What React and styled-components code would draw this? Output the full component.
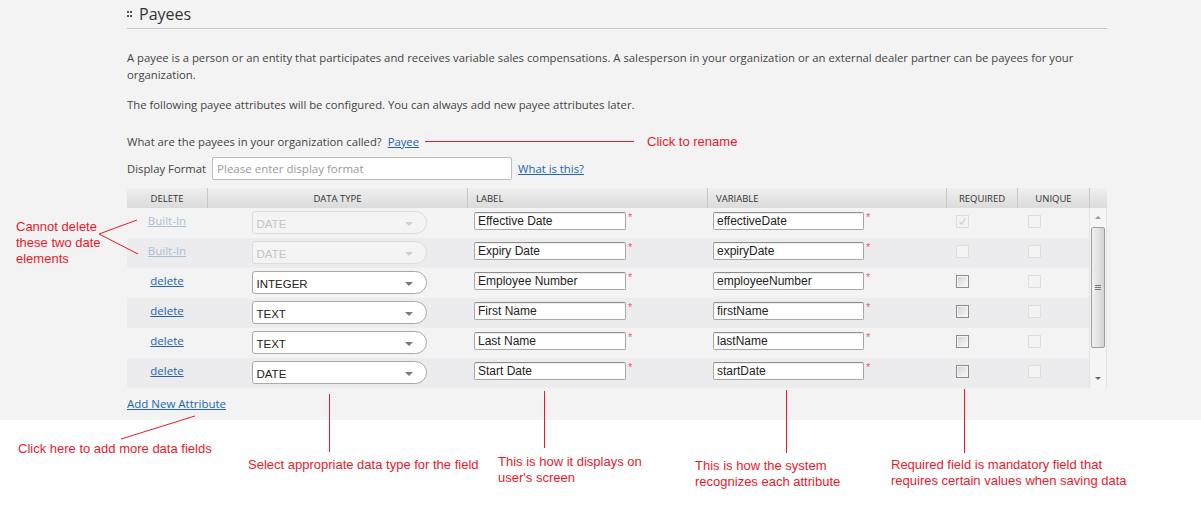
import React from 'react';
import styled, { createGlobalStyle, css } from 'styled-components';

const RED = '#e8192c';

const GlobalStyle = createGlobalStyle`
  html, body { margin: 0; padding: 0; background: #fff; }
  body { font-family: "Open Sans", "Noto Sans", sans-serif; color: #444; }
`;

const Page = styled.div`
  position: relative;
  width: 1201px;
  height: 510px;
  overflow: hidden;
  background: #fff;
`;

const Panel = styled.section`
  background: #f3f3f3;
  height: 420px;
  padding-left: 127px;
  box-sizing: border-box;
`;

const Column = styled.div`
  width: 980px;
`;

const TitleBar = styled.div`
  height: 28px;
  border-bottom: 1px solid #c6c6c6;
  display: flex;
  align-items: center;
  gap: 7px;
`;

const Title = styled.h2`
  margin: 0;
  font-size: 16px;
  font-weight: 400;
  color: #333;
  line-height: 28px;
`;

const Para = styled.p`
  margin: ${(p) => p.$top}px 0 0;
  font-size: 11.3px;
  line-height: 17px;
  color: #444;
`;

const Link = styled.a`
  color: ${(p) => (p.$muted ? '#a9c0d8' : '#2665ad')};
  text-decoration: underline;
  cursor: pointer;
`;

const QuestionRow = styled.div`
  margin-top: 20px;
  height: 17px;
  display: flex;
  align-items: center;
  font-size: 11.3px;
  color: #444;
`;

const Leader = styled.span`
  width: 209px;
  height: 1px;
  background: ${RED};
  margin: 0 13px 0 6px;
`;

const Note = styled.span`
  font-family: "Liberation Sans", Arial, sans-serif;
  font-size: 13px;
  line-height: 16px;
  color: ${RED};
  white-space: nowrap;
`;

const FormatRow = styled.div`
  margin-top: 7px;
  display: flex;
  align-items: center;
  gap: 6px;
  font-size: 11.3px;
  color: #444;
`;

const FormatInput = styled.input`
  width: 300px;
  height: 23px;
  box-sizing: border-box;
  border: 1px solid #bdbdbd;
  border-radius: 2px;
  padding: 0 4px;
  font-family: "Open Sans", sans-serif;
  font-size: 11.5px;
  background: #fff;
  &::placeholder { color: #9a9a9a; }
`;

const Table = styled.div`
  margin-top: 8px;
  width: 980px;
`;

const COLS = '80px 260px 240px 239px 71px 72px';

const HeaderRow = styled.div`
  display: grid;
  grid-template-columns: ${COLS} 18px;
  height: 20px;
  background: linear-gradient(#efefef, #dbdbdb);
`;

const HeaderCell = styled.div`
  display: flex;
  align-items: center;
  justify-content: ${(p) => (p.$left ? 'flex-start' : 'center')};
  padding-left: ${(p) => (p.$left ? '8px' : '0')};
  border-left: ${(p) => (p.$first ? 'none' : '1px solid #c9c9c9')};
  font-size: 9.5px;
  color: #333;
  text-transform: uppercase;
`;

const Body = styled.div`
  display: flex;
`;

const Rows = styled.div`
  width: 962px;
`;

const Row = styled.div`
  display: grid;
  grid-template-columns: ${COLS};
  height: 30px;
  background: ${(p) => (p.$alt ? '#ececee' : '#f3f3f3')};
`;

const Cell = styled.div`
  display: flex;
  align-items: flex-start;
  justify-content: ${(p) => (p.$center ? 'center' : 'flex-start')};
  padding-top: ${(p) => p.$top || 0}px;
  padding-left: ${(p) => p.$left || 0}px;
  box-sizing: border-box;
`;

const DeleteLink = styled(Link)`
  font-size: 11.5px;
  line-height: 15px;
`;

const Select = styled.div`
  width: 175px;
  height: 23px;
  box-sizing: border-box;
  border: 1px solid ${(p) => (p.$disabled ? '#dcdcdc' : '#a9a9a9')};
  border-radius: 3px 12px 12px 3px;
  background: ${(p) => (p.$disabled ? '#f4f4f4' : '#fff')};
  color: ${(p) => (p.$disabled ? '#c4c4c4' : '#222')};
  font-family: "Liberation Sans", Arial, sans-serif;
  font-size: 11.5px;
  display: flex;
  align-items: center;
  justify-content: space-between;
  padding: 2px 13px 0 4px;
  &::after {
    content: '';
    border-left: 4px solid transparent;
    border-right: 4px solid transparent;
    border-top: 4px solid ${(p) => (p.$disabled ? '#cfcfcf' : '#7a7a7a')};
  }
`;

const TextInput = styled.input`
  width: ${(p) => p.$w}px;
  height: 18px;
  box-sizing: border-box;
  border: 1px solid #a8a8a8;
  border-top-color: #8e8e8e;
  border-radius: 2px;
  box-shadow: inset 0 1px 1px rgba(0, 0, 0, 0.08);
  padding: 0 3px;
  font-family: "Liberation Sans", Arial, sans-serif;
  font-size: 12px;
  color: #222;
  background: #fff;
`;

const Star = styled.span`
  color: #f05a6a;
  font-family: "Liberation Sans", Arial, sans-serif;
  font-size: 11px;
  line-height: 11px;
  margin-left: 2px;
`;

const Check = styled.span`
  width: 13px;
  height: 13px;
  box-sizing: border-box;
  display: flex;
  align-items: center;
  justify-content: center;
  ${(p) =>
    p.$disabled
      ? css`
          border: 1px solid #dedede;
          background: #f3f3f3;
        `
      : css`
          border: 1px solid #8c8c8c;
          background: linear-gradient(135deg, #d2d2d2, #fbfbfb);
          box-shadow: inset 0 0 0 1px #f4f4f4;
        `}
`;

const Scrollbar = styled.div`
  width: 18px;
  height: 180px;
  box-sizing: border-box;
  border-left: 1px solid #e3e3e3;
  border-right: 1px solid #e3e3e3;
  background: #f5f5f5;
  display: flex;
  flex-direction: column;
  align-items: center;
`;

const ArrowBox = styled.div`
  height: 19px;
  display: flex;
  align-items: center;
  justify-content: center;
  &::after {
    content: '';
    border-left: 3px solid transparent;
    border-right: 3px solid transparent;
    ${(p) =>
      p.$down
        ? css`border-top: 3px solid #6a6a6a;`
        : css`border-bottom: 3px solid #9a9a9a;`}
  }
`;

const Thumb = styled.div`
  width: 14px;
  height: 121px;
  box-sizing: border-box;
  border: 1px solid #9e9e9e;
  border-radius: 2px;
  background: linear-gradient(90deg, #f0f0f0, #d4d4d4);
  display: flex;
  flex-direction: column;
  align-items: center;
  justify-content: center;
  gap: 1px;
`;

const GripLine = styled.span`
  width: 6px;
  height: 1px;
  background: #777;
`;

const Spacer = styled.div`
  flex: 1;
`;

const AddRow = styled.div`
  margin-top: 7px;
  font-size: 11.5px;
  line-height: 17px;
`;

const Callout = styled(Note)`
  position: absolute;
  left: ${(p) => p.$x}px;
  top: ${(p) => p.$y}px;
`;

const LeaderLines = styled.svg`
  position: absolute;
  left: 0;
  top: 0;
  pointer-events: none;
`;

const rows = [
  { builtIn: true, type: 'DATE', label: 'Effective Date', variable: 'effectiveDate', req: 'checked' },
  { builtIn: true, type: 'DATE', label: 'Expiry Date', variable: 'expiryDate', req: 'disabled' },
  { type: 'INTEGER', label: 'Employee Number', variable: 'employeeNumber' },
  { type: 'TEXT', label: 'First Name', variable: 'firstName' },
  { type: 'TEXT', label: 'Last Name', variable: 'lastName' },
  { type: 'DATE', label: 'Start Date', variable: 'startDate' },
];

function Grip() {
  return (
    <svg width="5" height="6" viewBox="0 0 5 6">
      <rect x="0" y="0" width="2" height="2" fill="#555" />
      <rect x="3" y="0" width="2" height="2" fill="#555" />
      <rect x="0" y="4" width="2" height="2" fill="#555" />
      <rect x="3" y="4" width="2" height="2" fill="#555" />
    </svg>
  );
}

function CheckMark() {
  return (
    <svg width="9" height="9" viewBox="0 0 9 9">
      <path d="M1.5 5 L3.5 7 L7.5 1.5" stroke="#cfcfcf" strokeWidth="1.2" fill="none" />
    </svg>
  );
}

function AttributeRow({ row, alt }) {
  return (
    <Row $alt={alt}>
      <Cell $center $top={5}>
        <DeleteLink $muted={row.builtIn}>{row.builtIn ? 'Built-In' : 'delete'}</DeleteLink>
      </Cell>
      <Cell $center $top={3} $left={4}>
        <Select $disabled={row.builtIn}>{row.type}</Select>
      </Cell>
      <Cell $top={4} $left={7}>
        <TextInput $w={152} defaultValue={row.label} />
        <Star>*</Star>
      </Cell>
      <Cell $top={4} $left={6}>
        <TextInput $w={151} defaultValue={row.variable} />
        <Star>*</Star>
      </Cell>
      <Cell $top={7} $left={10}>
        <Check $disabled={!!row.req}>{row.req === 'checked' && <CheckMark />}</Check>
      </Cell>
      <Cell $top={7} $left={11}>
        <Check $disabled />
      </Cell>
    </Row>
  );
}

export default function App() {
  return (
    <Page>
      <GlobalStyle />
      <Panel>
        <Column>
          <TitleBar>
            <Grip />
            <Title>Payees</Title>
          </TitleBar>
          <Para $top={20}>
            A payee is a person or an entity that participates and receives variable sales compensations. A
            salesperson in your organization or an external dealer partner can be payees for your organization.
          </Para>
          <Para $top={13}>
            The following payee attributes will be configured. You can always add new payee attributes later.
          </Para>
          <QuestionRow>
            What are the payees in your organization called?&nbsp;&nbsp;<Link>Payee</Link>
            <Leader />
            <Note>Click to rename</Note>
          </QuestionRow>
          <FormatRow>
            Display Format
            <FormatInput placeholder="Please enter display format" />
            <Link>What is this?</Link>
          </FormatRow>
          <Table>
            <HeaderRow>
              <HeaderCell $first>Delete</HeaderCell>
              <HeaderCell>Data Type</HeaderCell>
              <HeaderCell $left>Label</HeaderCell>
              <HeaderCell $left>Variable</HeaderCell>
              <HeaderCell>Required</HeaderCell>
              <HeaderCell>Unique</HeaderCell>
              <HeaderCell />
            </HeaderRow>
            <Body>
              <Rows>
                {rows.map((row, i) => (
                  <AttributeRow key={row.variable} row={row} alt={i % 2 === 1} />
                ))}
              </Rows>
              <Scrollbar>
                <ArrowBox />
                <Thumb>
                  <GripLine />
                  <GripLine />
                  <GripLine />
                </Thumb>
                <Spacer />
                <ArrowBox $down />
              </Scrollbar>
            </Body>
          </Table>
          <AddRow>
            <Link>Add New Attribute</Link>
          </AddRow>
        </Column>
      </Panel>

      <LeaderLines width="1201" height="510">
        <g stroke={RED} strokeWidth="1">
          <line x1="99" y1="234" x2="137" y2="220" />
          <line x1="99" y1="234" x2="138" y2="254" />
          <line x1="195" y1="416" x2="121" y2="439" />
          <line x1="329.5" y1="394" x2="329.5" y2="452" />
          <line x1="544.5" y1="391" x2="544.5" y2="448" />
          <line x1="786.5" y1="390" x2="786.5" y2="453" />
          <line x1="964.5" y1="389" x2="964.5" y2="453" />
        </g>
      </LeaderLines>

      <Callout $x={16} $y={219}>
        Cannot delete
        <br />
        these two date
        <br />
        elements
      </Callout>
      <Callout $x={18} $y={441}>Click here to add more data fields</Callout>
      <Callout $x={248} $y={457}>Select appropriate data type for the field</Callout>
      <Callout $x={498} $y={454}>
        This is how it displays on
        <br />
        user's screen
      </Callout>
      <Callout $x={695} $y={458}>
        This is how the system
        <br />
        recognizes each attribute
      </Callout>
      <Callout $x={891} $y={457}>
        Required field is mandatory field that
        <br />
        requires certain values when saving data
      </Callout>
    </Page>
  );
}
